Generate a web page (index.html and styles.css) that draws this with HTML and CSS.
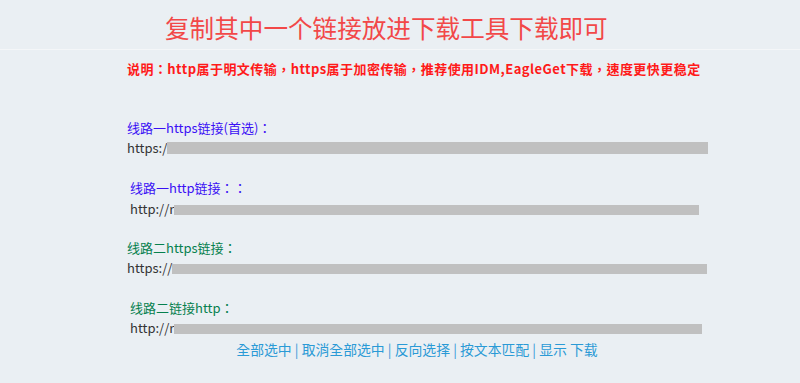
FILE: index.html
```html
<!DOCTYPE html>
<html>
<head>
<meta charset="utf-8">
<title>下载链接</title>
<link rel="stylesheet" href="styles.css">
</head>
<body>
<div class="top">
	<h1 class="titulo">复制其中一个链接放进下载工具下载即可</h1>
</div>
<div class="principal">
	<p class="nota">说明：http属于明文传输，https属于加密传输，推荐使用IDM,EagleGet下载，速度更快更稳定</p>

	<div class="linea g1">
		<div class="etq azul">线路一https链接(首选)：</div>
		<div class="url">https:/<span class="tapa t1"></span></div>
	</div>

	<div class="linea g2 sangria">
		<div class="etq azul">线路一http链接：：</div>
		<div class="url">http://r<span class="tapa t2"></span></div>
	</div>

	<div class="linea g3">
		<div class="etq verde">线路二https链接：</div>
		<div class="url">https://<span class="tapa t3"></span></div>
	</div>

	<div class="linea g4 sangria">
		<div class="etq verde">线路二链接http：</div>
		<div class="url">http://r<span class="tapa t4"></span></div>
	</div>

	<div class="acciones">
		<a href="#">全部选中</a> | <a href="#">取消全部选中</a> | <a href="#">反向选择</a> | <a href="#">按文本匹配</a> | <a href="#">显示 下载</a>
	</div>
</div>
</body>
</html>
```

FILE: styles.css
```css
body{
	margin:0;
	background-color:#eaeff3;
	font-family:"Noto Sans CJK TC","Noto Sans CJK SC",sans-serif;
	color:#333;
	font-size:13px;
}
.top{
	height:49px;
	border-bottom:1px solid #f4f6f8;
}
.titulo{
	margin:0 0 0 165px;
	padding-top:9px;
	font-family:"Noto Sans CJK SC",sans-serif;
	font-size:24.6px;
	line-height:36px;
	font-weight:normal;
	color:#f24848;
}
.principal{
	width:580px;
	margin-left:127px;
}
.nota{
	margin:9px 0 0 0;
	line-height:20px;
	font-size:13px;
	letter-spacing:0.45px;
	font-weight:bold;
	color:#ff1a1a;
	white-space:nowrap;
}
.linea{
	margin-top:39px;
}
.g2,.g3,.g4{
	margin-top:19px;
}
.g4{
	margin-top:20px;
}
.sangria{
	padding-left:3px;
}
.etq{
	line-height:20px;
}
.g2 .etq{
	line-height:22px;
}
.azul{
	color:#3a10f5;
}
.verde{
	color:#06804e;
}
.url{
	line-height:20px;
	white-space:nowrap;
}
.tapa{
	display:inline-block;
	height:12px;
	background-color:#c0c0c0;
	vertical-align:-1px;
}
.t1{ width:541px; }
.t2{ width:525px; height:10px; }
.t3{ width:535px; height:10px; }
.t4{ width:528px; height:10px; }
.acciones{
	margin-top:1px;
	line-height:20px;
	font-size:13.85px;
	text-align:center;
	color:#3a9ad9;
}
.acciones a{
	color:#2a9ad6;
	text-decoration:none;
}
```
